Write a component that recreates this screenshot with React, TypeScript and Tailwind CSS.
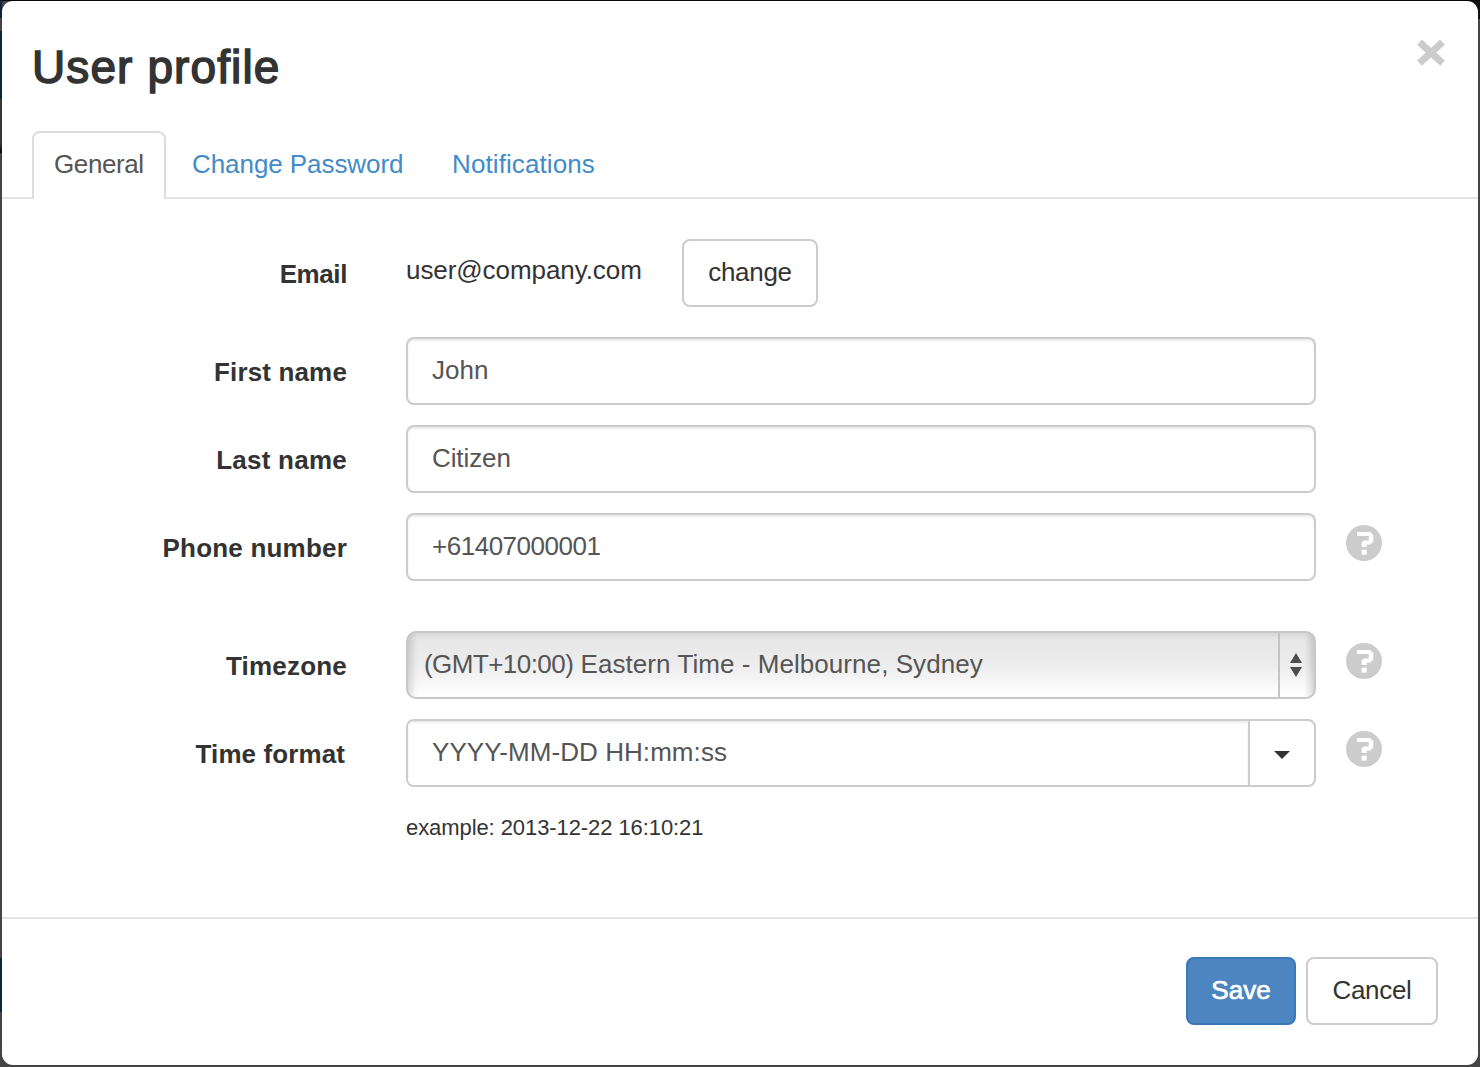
import type { ReactNode } from "react";

const inputClass =
  "block h-[68px] w-[910px] rounded-[8px] border-2 border-[#ccc] bg-white px-6 pb-px text-[26px] text-[#555] shadow-[inset_0_2px_2px_rgba(0,0,0,0.075)] outline-none";

function Row({ label, className, children }: { label: ReactNode; className: string; children: ReactNode }) {
  return (
    <div className={"flex " + className}>
      <label className="w-[345px] shrink-0 pt-[15px] text-right text-[26px] leading-[40px] font-bold">{label}</label>
      <div className="ml-[59px] flex">{children}</div>
    </div>
  );
}

function HelpIcon() {
  return (
    <svg className="mt-3 ml-[30px] size-9" viewBox="0 0 36 36" role="img" aria-label="Help">
      <circle cx="18" cy="18" r="18" fill="#ccc" />
      <path d="M11 7h13.200l3.100 3v6.500l-3 3h-3.600v2.500h-5v-4.500l2-2h5v-4.500h-11.700z" fill="#fff" />
      <rect x="15.700" y="24.700" width="5" height="5" fill="#fff" />
    </svg>
  );
}

function Tabs() {
  return (
    <nav className="flex h-[68px] border-b-2 border-[#e4e4e4] pl-[30px] text-[26px] leading-[37px]">
      <a className="-mb-[2px] h-[68px] w-[134px] rounded-t-[8px] border-2 border-b-0 border-[#ddd] bg-white pt-[13px] pl-[20px] tracking-[-0.4px] text-[#555]">
        General
      </a>
      <a className="w-[260px] pt-[15px] pl-[26px] tracking-[-0.07px] text-[#428bca]">Change Password</a>
      <a className="pt-[15px] pl-[26px] tracking-[0.1px] text-[#428bca]">Notifications</a>
    </nav>
  );
}

export default function App() {
  return (
    <div className="h-[1067px] w-[1480px] overflow-hidden bg-[linear-gradient(#080808_1px,transparent_1px),linear-gradient(90deg,transparent_50%,#111_50%)] bg-[length:100%_100%,100%_19px] bg-[#444] bg-no-repeat">
      <div className="flex h-full w-full bg-[linear-gradient(#0d2240_18px,#444_18px,#444_31px,#0b2443_31px,#0b2443_99px,#363636_99px,#363636_144px,#050505_153px,transparent_153px,transparent_958px,#0b2443_958px,#0b2443_1012px,transparent_1012px)] bg-[length:2px_100%] bg-no-repeat">
        <main className="mt-px ml-[2px] flex h-[1064px] w-[1476px] flex-col overflow-hidden rounded-[11px] bg-white font-['Liberation_Sans',Arial,sans-serif] text-[#333]">
          <header className="flex h-[130px] shrink-0 justify-between pr-[33px] pl-[30px]">
            <h1 className="pt-[36px] text-[46px] leading-[60px] tracking-[1.1px] [-webkit-text-stroke:1.5px_#333]">User profile</h1>
            <button aria-label="Close" className="mt-[38px] h-[28px] w-[28px]">
              <svg viewBox="0 0 28 28" className="size-7">
                <path d="M2.500 3.200 25.500 24.200M25.500 3.200 2.500 24.200" stroke="#ccc" strokeWidth="7" />
              </svg>
            </button>
          </header>
          <Tabs />
          <form className="flex h-[718px] shrink-0 flex-col pt-[40px]">
            <Row label={<span className="tracking-[-0.4px]">Email</span>} className="h-[98px]">
              <span className="w-[276px] pt-[11px] text-[26px] leading-[40px] tracking-[-0.07px]">user@company.com</span>
              <button type="button" className="h-[68px] w-[136px] rounded-[8px] border-2 border-[#ccc] bg-white pb-[2px] text-[26px] tracking-[-0.3px]">
                change
              </button>
            </Row>
            <Row label={<span className="tracking-[0.15px]">First name</span>} className="h-[88px]">
              <input className={inputClass} defaultValue="John" />
            </Row>
            <Row label={<span className="tracking-[0.25px]">Last name</span>} className="h-[88px]">
              <input className={inputClass + " tracking-[-0.1px]"} defaultValue="Citizen" />
            </Row>
            <Row label={<span className="tracking-[0.2px]">Phone number</span>} className="h-[118px]">
              <input className={inputClass + " tracking-[-0.48px]"} defaultValue="+61407000001" />
              <HelpIcon />
            </Row>
            <Row label={<span className="tracking-[0.2px]">Timezone</span>} className="h-[88px]">
              <div className="flex h-[68px] w-[910px] overflow-hidden rounded-[10px] border-2 border-[#c8c8c8] bg-[linear-gradient(90deg,rgba(0,0,0,0.13),transparent_9px,transparent_897px,rgba(0,0,0,0.14)),linear-gradient(#d8d8d8,#e6e6e6_6px,#ededed_50%,#fff)]">
                <span className="w-[870px] pt-[11px] pl-4 text-[26px] leading-[40px] tracking-[0.06px] text-[#555]">
                  <span className="tracking-[-0.55px]">(GMT+10:00)</span> Eastern Time - Melbourne, Sydney
                </span>
                <span className="flex grow border-l-2 border-[#c4c4c4] pt-[20px] pl-[10px]">
                  <svg width="12" height="24" viewBox="0 0 12 24" fill="#4d4d4d">
                    <path d="M6 0 12 10H0zM0 14h12L6 24z" />
                  </svg>
                </span>
              </div>
              <HelpIcon />
            </Row>
            <Row label={<span className="mr-[2px] tracking-[0.1px]">Time format</span>} className="h-[68px]">
              <div className="flex h-[68px] w-[910px] overflow-hidden rounded-[8px] border-2 border-[#ccc] bg-white">
                <input
                  className="block h-full w-[840px] bg-white pb-px pl-6 text-[26px] tracking-[0.07px] text-[#555] shadow-[inset_0_2px_2px_rgba(0,0,0,0.075)] outline-none"
                  defaultValue="YYYY-MM-DD HH:mm:ss"
                />
                <button type="button" aria-label="Choose format" className="flex grow items-start border-l-2 border-[#ccc] pt-[30px] pl-[24px]">
                  <svg width="16" height="8" viewBox="0 0 16 8" fill="#333">
                    <path d="M0 0h16L8 8z" />
                  </svg>
                </button>
              </div>
              <HelpIcon />
            </Row>
            <p className="pt-[25px] pl-[404px] text-[22px] leading-[32px] tracking-[-0.08px]">example: 2013-12-22 16:10:21</p>
          </form>
          <footer className="flex grow justify-end gap-[10px] border-t-2 border-[#e5e5e5] pt-[38px] pr-[40px] text-[26px]">
            <button className="h-[68px] w-[110px] rounded-[8px] border-2 border-[#3b78b8] bg-[#4c85c0] pb-[2px] text-white [-webkit-text-stroke:0.7px_#fff]">
              Save
            </button>
            <button className="h-[68px] w-[132px] rounded-[8px] border-2 border-[#ccc] bg-white pb-[2px] tracking-[-0.3px]">Cancel</button>
          </footer>
        </main>
      </div>
    </div>
  );
}
